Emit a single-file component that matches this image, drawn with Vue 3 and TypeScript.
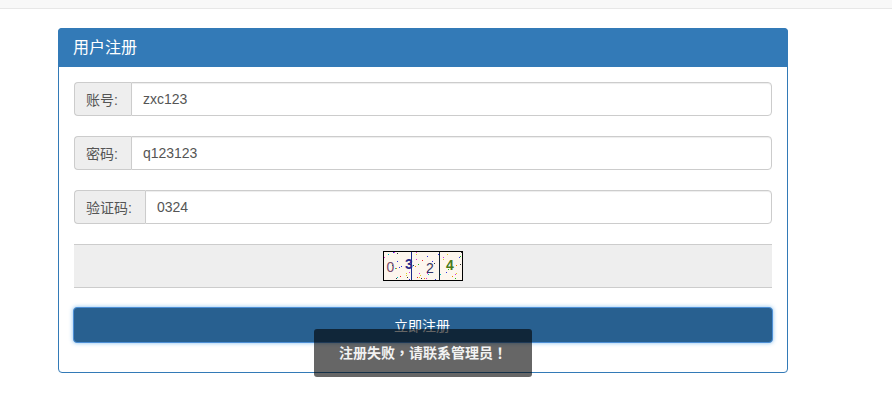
<script setup lang="ts">
import { ref } from 'vue';

const account = ref('zxc123');
const password = ref('q123123');
const code = ref('0324');

// Captcha noise, hashed from the index so that the picture stays the same
const noiseColors = ['#e22', '#2b2', '#33d', '#d3d', '#0bb', '#dc2', '#333', '#e80'];
function hash(n: number) {
  const v = Math.sin(n * 12.9898) * 43758.5453;
  return v - Math.floor(v);
}
const noise = Array.from({ length: 60 }, (_, i) => ({
  id: i,
  x: Math.floor(hash(i + 1) * 78),
  y: Math.floor(hash(i + 101) * 28),
  fill: noiseColors[Math.floor(hash(i + 201) * noiseColors.length)]
}));
</script>

<template>
  <div class="page">
    <div class="navbar"></div>
    <div class="panel">
      <div class="panel-heading">用户注册</div>
      <form class="panel-body" @submit.prevent>
        <div class="input-group">
          <span class="addon">账号:</span>
          <input v-model="account" class="field" type="text" />
        </div>
        <div class="input-group">
          <span class="addon">密码:</span>
          <input v-model="password" class="field" type="text" />
        </div>
        <div class="input-group">
          <span class="addon">验证码:</span>
          <input v-model="code" class="field" type="text" />
        </div>
        <div class="captcha-bar">
          <svg class="captcha" width="80" height="30" viewBox="0 0 80 30">
            <rect x="0.5" y="0.5" width="79" height="29" fill="#fdf6ee" stroke="#000" />
            <rect v-for="n in noise" :key="n.id" :x="n.x + 1" :y="n.y + 1" width="1" height="1" :fill="n.fill" />
            <line x1="28.5" y1="1" x2="28.5" y2="29" stroke="#1a2a8a" />
            <line x1="56.5" y1="1" x2="56.5" y2="29" stroke="#123" />
            <text x="3.5" y="21" class="digit" fill="#7a4a6a">0</text>
            <text x="22" y="18" class="digit heavy" fill="#2a2a8a">3</text>
            <text x="43" y="22" class="digit" fill="#333366">2</text>
            <text x="63" y="19" class="digit heavy" fill="#4a7a1a">4</text>
          </svg>
        </div>
        <button class="submit" type="submit">立即注册</button>
      </form>
    </div>
    <div class="toast">注册失败，请联系管理员！</div>
  </div>
</template>

<style scoped>
.page {
  position: relative;
  height: 413px;
  overflow: hidden;
  background: #fff;
  color: #555;
  font-family: "Liberation Sans", "Noto Sans CJK SC", sans-serif;
  font-size: 14px;
}

.navbar {
  height: 8px;
  background: #f8f8f8;
  border-bottom: 1px solid #e7e7e7;
}

.panel {
  width: 730px;
  box-sizing: border-box;
  margin: 19px 0 0 58px;
  border: 1px solid #337ab7;
  border-radius: 4px;
  background: #fff;
}

.panel-heading {
  margin: -1px -1px 0;
  padding: 10px 15px;
  height: 39px;
  box-sizing: border-box;
  background: #337ab7;
  color: #fff;
  font-size: 16px;
  line-height: 19px;
  border-radius: 4px 4px 0 0;
}

.panel-body {
  display: flex;
  flex-direction: column;
  gap: 20px;
  padding: 15px 15px 29px;
}

.input-group {
  display: flex;
  height: 34px;
}

.addon {
  display: flex;
  align-items: center;
  padding: 0 13px 0 11px;
  background: #eee;
  border: 1px solid #ccc;
  border-right: 0;
  border-radius: 4px 0 0 4px;
  color: #555;
}

.field {
  flex: 1;
  min-width: 0;
  box-sizing: border-box;
  padding: 6px 12px 6px 11px;
  border: 1px solid #ccc;
  border-radius: 0 4px 4px 0;
  box-shadow: inset 0 1px 1px rgba(0, 0, 0, 0.075);
  color: #555;
  font: inherit;
  outline: none;
}

.captcha-bar {
  display: flex;
  justify-content: center;
  align-items: center;
  height: 44px;
  box-sizing: border-box;
  background: #eee;
  border-top: 1px solid #ccc;
  border-bottom: 1px solid #ccc;
}

.captcha {
  display: block;
}

.digit {
  font-family: "Liberation Sans", sans-serif;
  font-size: 14px;
}

.digit.heavy {
  font-weight: 700;
}

.submit {
  height: 36px;
  margin: -1px -1px 0;
  padding: 0 2px 0 0;
  background: #286090;
  border: 1px solid #4d8fd6;
  border-radius: 4px;
  box-shadow: 0 0 4px rgba(102, 175, 233, 0.8);
  color: #fff;
  font: inherit;
}

.toast {
  position: absolute;
  left: 314px;
  top: 329px;
  width: 218px;
  height: 48px;
  border-radius: 3px;
  background: rgba(0, 0, 0, 0.6);
  color: #f2f2f2;
  font-family: "Liberation Sans", "Noto Sans CJK TC", sans-serif;
  line-height: 48px;
  text-align: center;
  font-weight: 700;
}
</style>
